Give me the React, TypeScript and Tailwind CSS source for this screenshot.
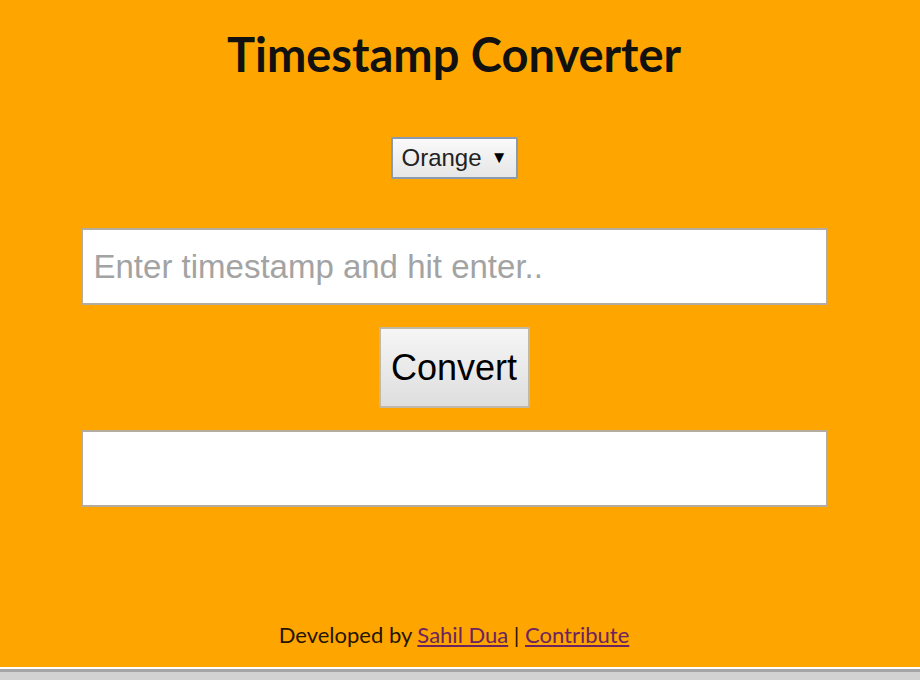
import { useState } from "react";

export default function App() {
  const [theme, setTheme] = useState("Orange");
  const [value, setValue] = useState("");
  const [result, setResult] = useState("");

  const convert = () => {
    const n = Number(value);
    if (!value || isNaN(n)) return setResult("");
    setResult(new Date(n * 1000).toString());
  };

  return (
    <div className="min-h-[680px] flex flex-col bg-[#d2d2d2]">
      {/*main orange area*/}
      <div className="h-[667px] bg-[#ffa500] flex flex-col items-center pr-[12px] font-['Liberation_Sans',sans-serif]">
        <h1 className="mt-[22px] text-[47px] leading-[64px] font-bold text-[#111] font-['Lato',sans-serif]">
          Timestamp Converter
        </h1>

        {/*theme select*/}
        <div className="relative mt-[51px] w-[127px] h-[42px]">
          <select
            value={theme}
            onChange={(e) => setTheme(e.target.value)}
            className="appearance-none w-full h-full pl-[9px] pr-8 text-[24px] text-[#222] bg-gradient-to-b from-[#fafafa] to-[#e6e6e6] border-2 border-[#8a9bb0] rounded-[2px] outline-none"
          >
            <option>Orange</option>
            <option>Blue</option>
            <option>Green</option>
          </select>
          <span className="absolute right-[10px] top-[8px] text-[17px] text-black pointer-events-none">
            ▼
          </span>
        </div>

        {/*timestamp input*/}
        <input
          value={value}
          onChange={(e) => setValue(e.target.value)}
          onKeyDown={(e) => e.key === "Enter" && convert()}
          placeholder="Enter timestamp and hit enter.."
          className="mt-[49px] w-[747px] h-[77px] pl-[11px] text-[33px] bg-white border-2 border-[#b5aca0] outline-none placeholder:text-[#a3a3a3]"
        />

        <button
          onClick={convert}
          className="mt-[22px] w-[151px] h-[81px] text-[36px] text-black bg-gradient-to-b from-[#f6f6f6] to-[#dedede] border-2 border-[#c2b8a8] rounded-[2px]"
        >
          Convert
        </button>

        {/*result box*/}
        <div className="mt-[22px] w-[747px] h-[77px] bg-white border-2 border-[#b5aca0] px-3 flex items-center text-[24px]">
          {result}
        </div>

        {/*footer*/}
        <div className="mt-auto mb-[16px] text-[22px] text-[#241500] font-['Lato',sans-serif]">
          Developed by{" "}
          <a href="#" className="text-[#6b2460] underline underline-offset-2">
            Sahil Dua
          </a>{" "}
          |{" "}
          <a href="#" className="text-[#6b2460] underline underline-offset-2">
            Contribute
          </a>
        </div>
      </div>

      {/*bottom strip*/}
      <div className="h-[2px] bg-white" />
      <div className="h-[3px] bg-[#a5a5a5]" />
    </div>
  );
}
